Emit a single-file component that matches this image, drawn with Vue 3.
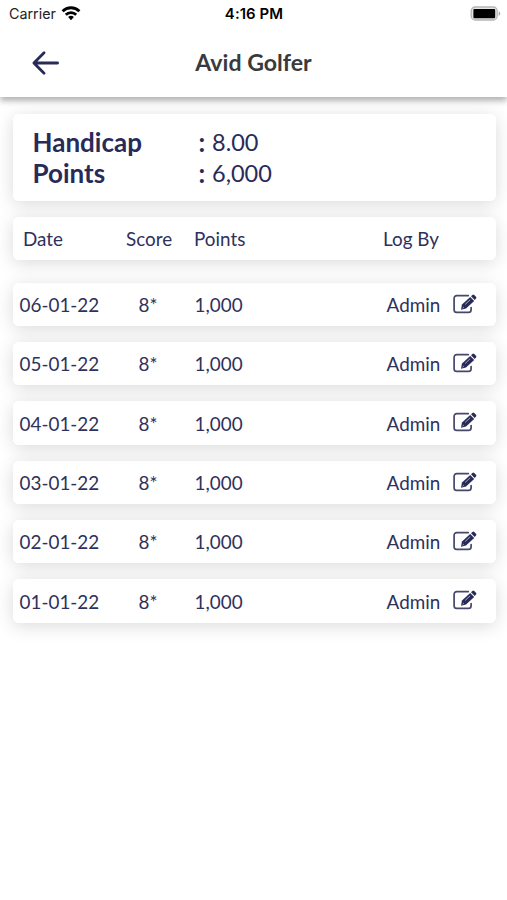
<template>
    <div class="screen">
        <header class="top">
            <div class="status">
                <div class="carrier">
                    <span>Carrier</span>
                    <svg class="wifi" width="20" height="15" viewBox="0 0 20 15" fill="none" stroke="#000" stroke-width="2.8">
                        <path d="M1.6 5.2a12 12 0 0 1 16.8 0" />
                        <path d="M4.8 8.7a7.4 7.4 0 0 1 10.4 0" />
                        <path d="M10 14.2 7.1 11.1a4.2 4.2 0 0 1 5.8 0z" fill="#000" stroke="none" />
                    </svg>
                </div>
                <span class="clock">4:16 PM</span>
                <svg class="battery" width="32" height="16" viewBox="0 0 32 16">
                    <rect x="1.2" y="1" width="26" height="13" rx="4" fill="#e6e6e6" stroke="#b5b5b5" stroke-width="1.3" />
                    <rect x="3.4" y="3" width="21.8" height="9.2" rx="1" fill="#000" />
                    <path d="M28.7 5.3v4.6a2.5 2.5 0 0 0 0-4.6z" fill="#a5a5a5" />
                </svg>
            </div>
            <div class="nav">
                <button class="back" aria-label="Back">
                    <svg width="30" height="26" viewBox="0 0 30 26" fill="none" stroke="#282b58" stroke-width="2.9" stroke-linecap="round" stroke-linejoin="round">
                        <path d="M13.5 2.5 3 13l10.5 10.5M3.5 13H27.5" />
                    </svg>
                </button>
                <h1>Avid Golfer</h1>
            </div>
        </header>

        <main>
            <section class="card summary">
                <div v-for="item in summary" :key="item.label" class="line">
                    <b>{{ item.label }}</b>
                    <b>:</b>
                    <span>{{ item.value }}</span>
                </div>
            </section>

            <div class="card row head">
                <span>Date</span>
                <span>Score</span>
                <span>Points</span>
                <span>Log By</span>
            </div>

            <div v-for="entry in entries" :key="entry.date" class="card row">
                <span>{{ entry.date }}</span>
                <span>{{ entry.score }}</span>
                <span>{{ entry.points }}</span>
                <span>{{ entry.logBy }}</span>
                <svg class="edit" width="24" height="20" viewBox="0 0 24 20">
                    <path d="M15.3 1.6H3.8A2.7 2.7 0 0 0 1.1 4.3v11.4a2.7 2.7 0 0 0 2.7 2.7h11.6a2.7 2.7 0 0 0 2.7-2.7v-2.1" fill="none" stroke="#45476b" stroke-width="1.7" stroke-linecap="round" />
                    <path d="M8 15.7 9 10.6 17.2 3l4 3.9-8.2 7.7z" fill="#282b58" />
                    <path d="m18 2.3 1.4-1.3a1.3 1.3 0 0 1 1.8 0L23 2.8a1.3 1.3 0 0 1 0 1.8l-1.3 1.4z" fill="#282b58" />
                    <path d="m12.2 10.4 5-4.7M9.5 14.2l1.4-1.2" fill="none" stroke="#c6c8d6" stroke-width=".8" />
                </svg>
            </div>
        </main>
    </div>
</template>

<script setup>
const summary = [
    { label: 'Handicap', value: '8.00' },
    { label: 'Points', value: '6,000' },
]

const dates = ['06-01-22', '05-01-22', '04-01-22', '03-01-22', '02-01-22', '01-01-22']

const entries = dates.map((date) => ({
    date,
    score: '8*',
    points: '1,000',
    logBy: 'Admin',
}))
</script>

<style>
body {
    margin: 0;
    background: #fff;
}
</style>

<style scoped>
.screen {
    height: 900px;
    overflow: hidden;
    background: #fff;
    color: #2e315c;
    font-family: Lato, 'Liberation Sans', sans-serif;
}

.top {
    position: relative;
    z-index: 1;
    height: 97px;
    background: #fff;
    box-shadow: 0 4px 6px rgba(0, 0, 0, 0.3);
}

.status {
    display: grid;
    grid-template-columns: 1fr auto 1fr;
    align-items: center;
    height: 27px;
    padding: 0 8px 0 9px;
    color: #000;
    font: 14.3px Inter, sans-serif;
}

.carrier {
    display: flex;
    align-items: center;
    gap: 5px;
    color: #222;
}

.clock {
    font-size: 14.9px;
    font-weight: 600;
    letter-spacing: 0.1px;
}

.battery {
    justify-self: end;
    margin-right: -3px;
}

.nav {
    display: grid;
    grid-template-columns: 60px 1fr 60px;
    align-items: center;
    height: 70px;
}

.back {
    display: flex;
    margin: 2px 0 0 31px;
    padding: 0;
    border: 0;
    background: none;
}

h1 {
    margin: 0;
    color: #3a3a3c;
    font-size: 23.1px;
    font-weight: 700;
    line-height: 28px;
    text-align: center;
}

main {
    display: flex;
    flex-direction: column;
    gap: 16px;
    padding: 17px 11px 0 13px;
    isolation: isolate;
}

.card {
    position: relative;
    border-radius: 6px;
    background: #fff;
}

/* shadow sits below every card so neighbours stay pure white */
.card::before {
    content: '';
    position: absolute;
    inset: 0;
    z-index: -1;
    border-radius: 6px;
    box-shadow: 0 3px 18px rgba(0, 0, 0, 0.15);
}

.summary {
    box-sizing: border-box;
    height: 87px;
    padding: 13px 19.5px;
}

.line {
    display: grid;
    grid-template-columns: 166px 13.5px 1fr;
    align-items: center;
    height: 31px;
    color: #282b58;
    font-size: 23.5px;
    line-height: 29px;
}

.line b {
    font-size: 26px;
}

.line span {
    padding-bottom: 1px;
}

.row {
    display: grid;
    grid-template-columns: 119px 56px 192px 66px 1fr;
    align-items: center;
    box-sizing: border-box;
    height: 43.3px;
    padding: 0.3px 0 0 6.6px;
    font-size: 18.85px;
    white-space: nowrap;
}

.head {
    grid-template-columns: 103px 68px 189px 1fr;
    margin-bottom: 6.6px;
    padding: 0 0 0 10px;
}

.edit {
    margin-top: -2px;
}
</style>
